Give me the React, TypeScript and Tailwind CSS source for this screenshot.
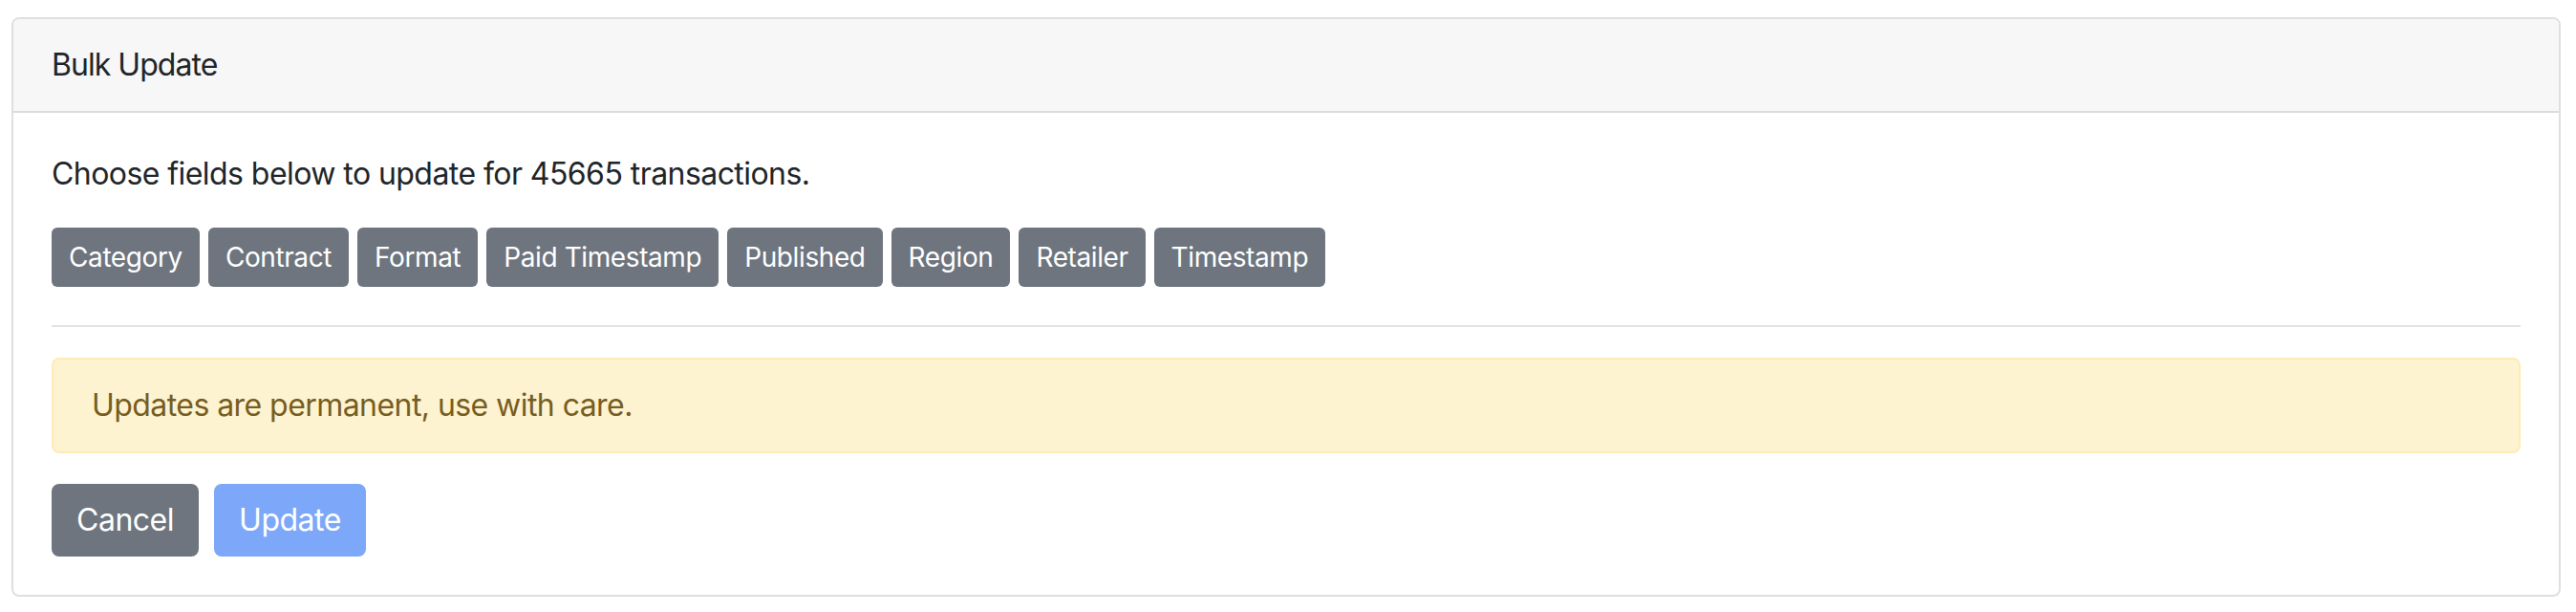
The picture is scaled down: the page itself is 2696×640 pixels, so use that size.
import React from "react";

const fields = [
  "Category",
  "Contract",
  "Format",
  "Paid Timestamp",
  "Published",
  "Region",
  "Retailer",
  "Timestamp",
];

export default function App() {
  return (
    <div
      className="w-[2696px] h-[640px] bg-white pl-[12px] pr-[16px] pt-[18px] text-[#212529] tracking-[-0.035em]"
      style={{ fontFamily: "Inter, 'Noto Sans', sans-serif" }}
    >
      <div className="border-2 border-[#dfdfdf] rounded-[8px] overflow-hidden">
        <div className="bg-[#f7f7f7] border-b-2 border-[#dcdcdc] px-[40px] py-[24px] text-[32px] leading-[48px] tracking-[-0.03em]">
          Bulk Update
        </div>
        <div className="p-[40px]">
          <p className="text-[32px] leading-[48px]">
            Choose fields below to update for 45665 transactions.
          </p>
          <div className="mt-[32px] flex flex-wrap gap-[9px] tracking-[-0.025em]">
            {fields.map((f) => (
              <button
                key={f}
                className="h-[62px] px-[18px] rounded-[6px] bg-[#6e757e] text-white text-[28px] leading-[42px]"
              >
                {f}
              </button>
            ))}
          </div>
          <div className="mt-[40px] mb-[32px] h-[2px] bg-[#e2e3e6]" />
          <div className="h-[100px] border-2 border-[#fdecb7] bg-[#fdf3d1] rounded-[8px] px-[40px] flex items-center text-[32px] leading-[48px] text-[#785d1f]">
            Updates are permanent, use with care.
          </div>
          <div className="mt-[32px] flex gap-[16px] tracking-[-0.03em]">
            <button className="h-[76px] px-[26px] rounded-[8px] bg-[#6e757e] text-white text-[32px] leading-[48px]">
              Cancel
            </button>
            <button className="h-[76px] px-[26px] rounded-[8px] bg-[#7da8f9] text-white text-[32px] leading-[48px]">
              Update
            </button>
          </div>
        </div>
      </div>
    </div>
  );
}
